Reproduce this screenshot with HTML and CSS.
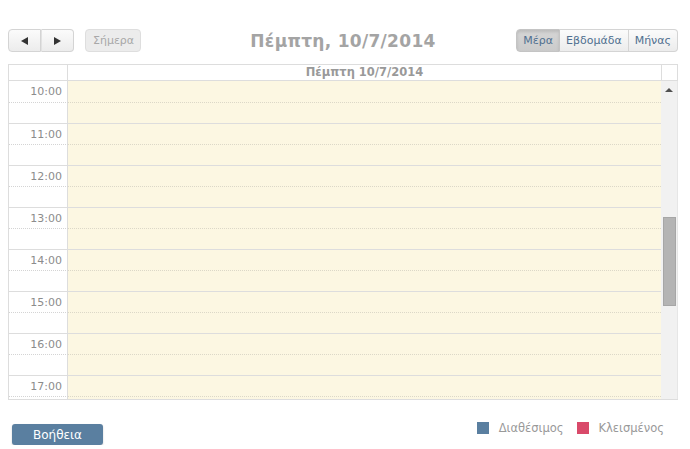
FILE: index.html
```html
<!DOCTYPE html>
<html lang="el">
<head>
    <meta charset="UTF-8">
    <title>Ημερολόγιο</title>
    <link rel="stylesheet" href="styles.css">
</head>
<body>
    <div class="page">
        <div class="toolbar">
            <div class="toolbar-left">
                <div class="btn-group">
                    <button class="btn arrow-btn"><span class="tri tri-left"></span></button>
                    <button class="btn arrow-btn"><span class="tri tri-right"></span></button>
                </div>
                <button class="btn btn-today">Σήμερα</button>
            </div>
            <h2 class="title">Πέμπτη, 10/7/2014</h2>
            <div class="btn-group views">
                <button class="btn active">Μέρα</button>
                <button class="btn">Εβδομάδα</button>
                <button class="btn">Μήνας</button>
            </div>
        </div>

        <div class="calendar">
            <div class="cal-head">
                <div class="head-axis"></div>
                <div class="head-day">Πέμπτη 10/7/2014</div>
                <div class="head-gutter"></div>
            </div>
            <div class="cal-body">
                <div class="slots">
                    <div class="slot hour"><div class="time">10:00</div><div class="cell"></div></div>
                    <div class="slot half"><div class="time"></div><div class="cell"></div></div>
                    <div class="slot hour"><div class="time">11:00</div><div class="cell"></div></div>
                    <div class="slot half"><div class="time"></div><div class="cell"></div></div>
                    <div class="slot hour"><div class="time">12:00</div><div class="cell"></div></div>
                    <div class="slot half"><div class="time"></div><div class="cell"></div></div>
                    <div class="slot hour"><div class="time">13:00</div><div class="cell"></div></div>
                    <div class="slot half"><div class="time"></div><div class="cell"></div></div>
                    <div class="slot hour"><div class="time">14:00</div><div class="cell"></div></div>
                    <div class="slot half"><div class="time"></div><div class="cell"></div></div>
                    <div class="slot hour"><div class="time">15:00</div><div class="cell"></div></div>
                    <div class="slot half"><div class="time"></div><div class="cell"></div></div>
                    <div class="slot hour"><div class="time">16:00</div><div class="cell"></div></div>
                    <div class="slot half"><div class="time"></div><div class="cell"></div></div>
                    <div class="slot hour"><div class="time">17:00</div><div class="cell"></div></div>
                    <div class="slot half"><div class="time"></div><div class="cell"></div></div>
                </div>
                <div class="scrollbar">
                    <span class="sb-arrow up"></span>
                    <div class="sb-track"><div class="sb-thumb"></div></div>
                    <span class="sb-arrow down"></span>
                </div>
            </div>
        </div>

        <div class="footer">
            <button class="help-btn">Βοήθεια</button>
            <div class="legend">
                <span class="legend-item"><span class="swatch free"></span>Διαθέσιμος</span>
                <span class="legend-item"><span class="swatch booked"></span>Κλεισμένος</span>
            </div>
        </div>
    </div>
</body>
</html>
```

FILE: styles.css
```css
body {
    margin: 0;
    font-family: 'DejaVu Sans', Verdana, sans-serif;
    background: #ffffff;
    color: #666;
}
.page {
    padding: 29px 12px 0 8px;
}
.toolbar {
    display: flex;
    align-items: center;
    justify-content: space-between;
    height: 23px;
}
.toolbar-left {
    display: flex;
    gap: 11px;
    width: 200px;
}
.btn-group {
    display: flex;
}
.btn {
    font-family: 'DejaVu Sans', Verdana, sans-serif;
    font-size: 11px;
    height: 23px;
    padding: 0 7px;
    margin: 0;
    border: 1px solid #d4d4d4;
    background: linear-gradient(#fbfbfb, #ececec);
    color: #4f6f8f;
    cursor: pointer;
}
.btn-group .btn:first-child {
    border-radius: 4px 0 0 4px;
}
.btn-group .btn:last-child {
    border-radius: 0 4px 4px 0;
}
.btn-group .btn + .btn {
    border-left: none;
}
.arrow-btn {
    width: 33px;
    display: flex;
    align-items: center;
    justify-content: center;
}
.arrow-btn + .arrow-btn {
    border-left: 1px solid #e2e2e2 !important;
}
.tri {
    width: 0;
    height: 0;
    border-top: 4px solid transparent;
    border-bottom: 4px solid transparent;
}
.tri-left {
    border-right: 7px solid #333;
}
.tri-right {
    border-left: 7px solid #333;
}
.btn-today {
    width: 56px;
    border-radius: 4px;
    color: #a8a8a8;
    background: #ececec;
    border-color: #dedede;
}
.title {
    margin: 0;
    font-size: 17px;
    font-weight: bold;
    color: #a4a4a4;
    letter-spacing: 0.3px;
}
.views {
    width: 200px;
    justify-content: flex-end;
}
.views .btn {
    padding: 0 6px;
}
.views .btn.active {
    background: linear-gradient(#d6d6d6, #cbcbcb);
    box-shadow: inset 0 2px 3px rgba(0, 0, 0, 0.12);
    border-color: #c4c4c4;
}
.calendar {
    margin-top: 12px;
    border: 1px solid #dddddd;
    border-right: none;
}
.cal-head {
    display: grid;
    grid-template-columns: 59px 1fr 17px;
    height: 15px;
    border-bottom: 1px solid #dddddd;
}
.head-axis {
    border-right: 1px solid #dddddd;
}
.head-day {
    font-size: 11.5px;
    font-weight: bold;
    color: #999;
    text-align: center;
    line-height: 15px;
}
.head-gutter {
    border-left: 1px solid #dddddd;
    border-right: 1px solid #dddddd;
}
.cal-body {
    display: grid;
    grid-template-columns: 1fr 17px;
    height: 318px;
    overflow: hidden;
}
.slot {
    display: grid;
    grid-template-columns: 59px 1fr;
    height: 21px;
    box-sizing: border-box;
}
.slot.hour {
    border-top: 1px solid #dddddd;
}
.slot.hour:first-child {
    border-top: none;
}
.slot.half .cell {
    border-top: 1px dotted #dcd8c8;
}
.slot.half .time {
    border-top: 1px dotted #d4d4d4;
}
.time {
    border-right: 1px solid #dddddd;
    font-size: 11px;
    color: #8c8c8c;
    text-align: right;
    padding-right: 5px;
    line-height: 21px;
}
.cell {
    background: #fcf7e2;
}
.scrollbar {
    background: #f1f1f1;
    display: flex;
    flex-direction: column;
    align-items: center;
    border-right: 1px solid #e6e6e6;
}
.sb-arrow {
    width: 0;
    height: 0;
    border-left: 4px solid transparent;
    border-right: 4px solid transparent;
    margin: 7px 0 6px;
}
.sb-arrow.up {
    border-bottom: 4px solid #505050;
}
.sb-arrow.down {
    border-top: 4px solid #505050;
}
.sb-track {
    flex: 1;
    width: 100%;
    padding-top: 119px;
    box-sizing: border-box;
    display: flex;
    justify-content: center;
}
.sb-thumb {
    width: 13px;
    height: 89px;
    background: #b4b4b4;
    border: 1px solid #a6a6a6;
    box-sizing: border-box;
}
.footer {
    display: flex;
    justify-content: space-between;
    align-items: flex-start;
    padding: 24px 14px 0 4px;
}
.help-btn {
    font-family: 'DejaVu Sans', Verdana, sans-serif;
    font-size: 12px;
    width: 91px;
    height: 21px;
    background: #5a7fa0;
    color: #ffffff;
    border: none;
    border-radius: 3px;
    box-shadow: 0 1px 2px rgba(0, 0, 0, 0.2);
}
.legend {
    display: flex;
    gap: 13px;
    font-size: 11.5px;
    line-height: 14px;
    color: #999;
    margin-top: -3px;
}
.legend-item {
    display: flex;
    align-items: center;
}
.swatch {
    width: 12px;
    height: 12px;
    margin-right: 10px;
}
.swatch.free {
    background: #5a7fa0;
}
.swatch.booked {
    background: #d94a6a;
}
```
